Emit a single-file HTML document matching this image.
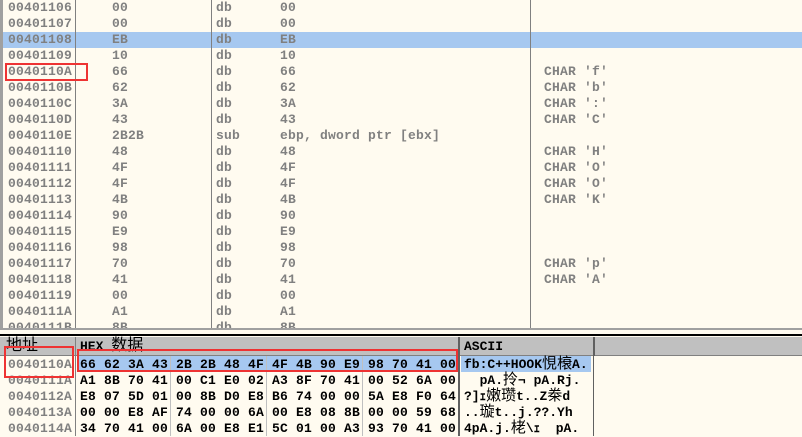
<!DOCTYPE html>
<html><head><meta charset="utf-8"><style>
body{margin:0;width:802px;height:436px;overflow:hidden;background:#fffbf0;position:relative;font-family:"Liberation Mono","WenQuanYi Zen Hei",monospace;font-size:13px;}
.t{position:absolute;white-space:pre;line-height:16px;}
.g{color:#808080;font-weight:bold;letter-spacing:0.2px;}
.b{color:#000;font-weight:bold;}
.v{position:absolute;background:#808080;width:1px;}
.hl{position:absolute;background:#a6c8f0;}
.red{position:absolute;border:2px solid #ee3333;box-sizing:border-box;}
.c{font-family:"WenQuanYi Zen Hei",sans-serif;font-size:15px;font-weight:normal;line-height:0;}
</style></head><body>
<div style="position:absolute;left:0;top:0;width:3px;height:330px;background:#a0a0a0"></div>
<div class="hl" style="left:3px;top:32px;width:799px;height:16px"></div>
<div class="v" style="left:75px;top:0;height:329px"></div>
<div class="v" style="left:211px;top:0;height:329px"></div>
<div class="v" style="left:530px;top:0;height:329px"></div>

<div class="t g" style="left:8px;top:0">00401106
00401107
00401108
00401109
0040110A
0040110B
0040110C
0040110D
0040110E
00401110
00401111
00401112
00401113
00401114
00401115
00401116
00401117
00401118
00401119
0040111A
0040111B</div>
<div class="t g" style="left:112px;top:0">00
00
EB
10
66
62
3A
43
2B2B
48
4F
4F
4B
90
E9
98
70
41
00
A1
8B</div>
<div class="t g" style="left:216px;top:0">db
db
db
db
db
db
db
db
sub
db
db
db
db
db
db
db
db
db
db
db
db</div>
<div class="t g" style="left:280px;top:0">00
00
EB
10
66
62
3A
43
ebp, dword ptr [ebx]
48
4F
4F
4B
90
E9
98
70
41
00
A1
8B</div>
<div class="t g" style="left:544px;top:0">



CHAR 'f'
CHAR 'b'
CHAR ':'
CHAR 'C'

CHAR 'H'
CHAR 'O'
CHAR 'O'
CHAR 'K'



CHAR 'p'
CHAR 'A'</div>
<div class="red" style="left:5px;top:63px;width:83px;height:18px"></div>

<div style="position:absolute;left:0;top:328px;width:802px;height:2px;background:#a0a0a0"></div>
<div style="position:absolute;left:0;top:330px;width:802px;height:6px;background:#fffbf0"></div>
<div style="position:absolute;left:0;top:334px;width:802px;height:2px;background:#000"></div>
<div style="position:absolute;left:0;top:336px;width:802px;height:100px;background:#fffbf0"></div>
<div style="position:absolute;left:0;top:337px;width:802px;height:18px;background:#c0c0c0;border-bottom:1px solid #808080"></div>
<div style="position:absolute;left:75px;top:337px;width:1px;height:99px;background:#808080"></div>
<div style="position:absolute;left:458px;top:337px;width:2px;height:99px;background:#606060"></div>
<div style="position:absolute;left:593px;top:337px;width:2px;height:99px;background:#606060"></div>
<div style="position:absolute;left:594px;top:356px;width:208px;height:80px;background:#fffbf0"></div>
<div style="position:absolute;left:595px;top:337px;width:207px;height:18px;background:#c0c0c0"></div>
<div class="t" style="left:6px;top:338px;font-size:16px;font-family:'WenQuanYi Zen Hei',sans-serif">地址</div>
<div class="t b" style="left:80px;top:339px">HEX <span class="c" style="font-size:16px">数据</span></div>
<div class="t b" style="left:464px;top:339px">ASCII</div>

<div class="hl" style="left:77px;top:356px;width:381px;height:16px"></div>
<div class="hl" style="left:461px;top:356px;width:130px;height:16px"></div>
<div class="v" style="left:170px;top:356px;height:80px;background:#c0c0c0"></div>
<div class="v" style="left:266px;top:356px;height:80px;background:#c0c0c0"></div>
<div class="v" style="left:362px;top:356px;height:80px;background:#c0c0c0"></div>

<div class="t g" style="left:8px;top:357px">0040110A
0040111A
0040112A
0040113A
0040114A</div>
<div class="t b" style="left:80px;top:357px;letter-spacing:0.2px">66 62 3A 43 2B 2B 48 4F 4F 4B 90 E9 98 70 41 00
A1 8B 70 41 00 C1 E0 02 A3 8F 70 41 00 52 6A 00
E8 07 5D 01 00 8B D0 E8 B6 74 00 00 5A E8 F0 64
00 00 E8 AF 74 00 00 6A 00 E8 08 8B 00 00 59 68
34 70 41 00 6A 00 E8 E1 5C 01 00 A3 93 70 41 00</div>
<div class="t b" style="left:464px;top:357px">fb:C++HOOK<span class="c">悓榱</span>A.
  pA.<span class="c">拎</span>¬ pA.Rj.
?]ｪ<span class="c">嫩瓒</span>t..Z<span class="c">桊</span>d
..<span class="c">璇</span>t..j.??.Yh
4pA.j.<span class="c">栳</span>\ｪ  pA.</div>

<div class="red" style="left:4px;top:346px;width:70px;height:32px"></div>
<div class="red" style="left:77px;top:349px;width:381px;height:23px"></div>
</body></html>
